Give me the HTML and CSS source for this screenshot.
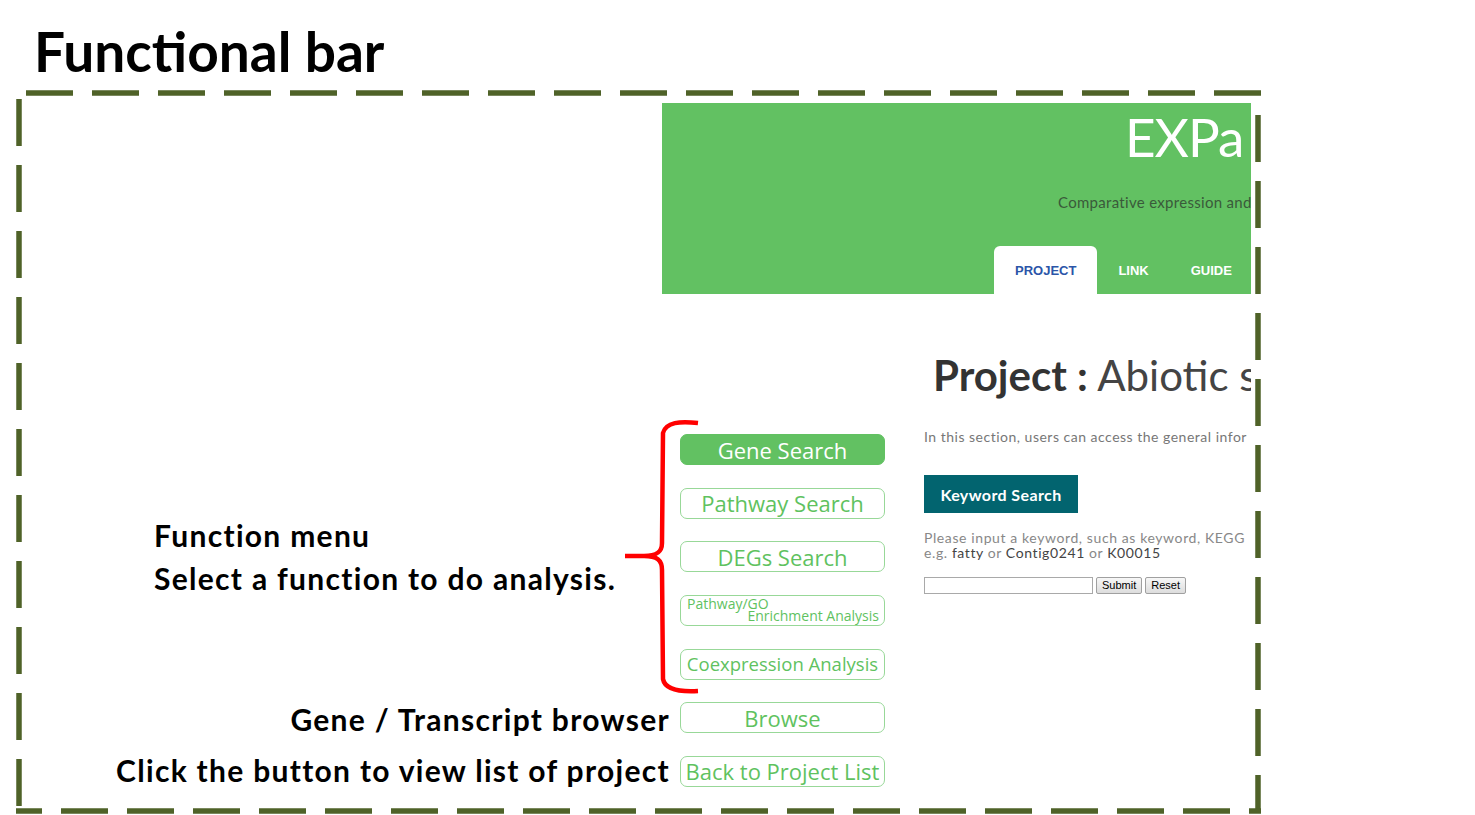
FILE: index.html
```html
<!DOCTYPE html>
<html lang="en">
  <head>
    <meta charset="UTF-8">
    <title>Functional bar</title>
    <link rel="stylesheet" href="styles.css">
  </head>
  <body>
    <div class="slide">
      <h1 class="title">Functional bar</h1>

      <div class="stage">
        <div class="notes">
          <svg class="brace" width="82" height="280" viewBox="0 0 82 280">
            <path d="M78,4 C60,2 46,3 43,14 L42,124 C42,133 37,137 24,137 L5,137 M24,137 C37,137 42,141 42,151 L43,260 C45,271 60,273 78,272" />
          </svg>
          <p class="note note-menu">Function menu<br>Select a function to do analysis.</p>
          <p class="note note-right note-browser">Gene / Transcript browser</p>
          <p class="note note-right note-list">Click the button to view list of project</p>
        </div>

        <div class="web">
          <div class="web-header">
            <div class="logo">EXPa</div>
            <div class="tagline">Comparative expression and</div>
            <ul class="tabs">
              <li class="tab active">PROJECT</li>
              <li class="tab">LINK</li>
              <li class="tab">GUIDE</li>
            </ul>
          </div>

          <div class="web-body">
            <div class="sidebar">
              <a class="fn-btn active" href="#gene">Gene Search</a>
              <a class="fn-btn" href="#pathway">Pathway Search</a>
              <a class="fn-btn" href="#degs">DEGs Search</a>
              <a class="fn-btn fn-two" href="#enrich">
                <span class="l1">Pathway/GO</span>
                <span class="l2">Enrichment Analysis</span>
              </a>
              <a class="fn-btn fn-coexp" href="#coexp">Coexpression Analysis</a>
              <a class="fn-btn" href="#browse">Browse</a>
              <a class="fn-btn" href="#list">Back to Project List</a>
            </div>

            <div class="main">
              <h2 class="project-title"><b>Project :</b> <span>Abiotic s</span></h2>
              <p class="intro">In this section, users can access the general infor</p>
              <div class="kw-btn">Keyword Search</div>
              <p class="hint">Please input a keyword, such as keyword, KEGG<br>e.g. <strong>fatty</strong> or <strong>Contig0241</strong> or <strong>K00015</strong></p>
              <form class="search-row">
                <input class="kw-input" type="text">
                <button class="small-btn" type="button">Submit</button>
                <button class="small-btn" type="button">Reset</button>
              </form>
            </div>
          </div>
        </div>
      </div>

      <svg class="frame" width="1475" height="815" viewBox="0 0 1475 815">
        <line x1="26" y1="93" x2="1262" y2="93" />
        <line x1="19" y1="99" x2="19" y2="813" />
        <line x1="1258" y1="96" x2="1258" y2="813" stroke-dashoffset="47" />
        <line x1="16" y1="811" x2="1261" y2="811" stroke-dashoffset="21" />
      </svg>
    </div>
  </body>
</html>
```

FILE: styles.css
```css
/* Slide */
body {
  margin: 0;
  background-color: #fff;
}

.slide {
  position: relative;
  width: 1475px;
  height: 815px;
  overflow: hidden;
  background-color: #fff;
}

.title {
  margin: 0;
  height: 103px;
  box-sizing: border-box;
  padding: 18px 0 0 34px;
  font-family: Lato, sans-serif;
  font-size: 55px;
  font-weight: bold;
  line-height: 66px;
  color: #000;
}

.stage {
  display: flex;
  height: 712px;
}

/* Annotations */
.notes {
  position: relative;
  flex-shrink: 0;
  width: 662px;
  font-family: Lato, sans-serif;
  font-size: 30px;
  font-weight: bold;
  letter-spacing: 1.3px;
  color: #000;
}

.note {
  margin: 0;
  line-height: 43px;
  white-space: nowrap;
}

.note-menu {
  margin-top: 411px;
  padding-left: 154px;
}

.note-right {
  text-align: right;
  margin-right: -8px;
}

.note-browser {
  margin-top: 98px;
}

.note-list {
  margin-top: 8px;
}

.brace {
  position: absolute;
  left: 620px;
  top: 316px;
}

.brace path {
  fill: none;
  stroke: #ff0000;
  stroke-width: 4.5;
}

/* Dashed frame */
.frame {
  position: absolute;
  top: 0;
  left: 0;
  pointer-events: none;
}

.frame line {
  stroke: #4f6228;
  stroke-width: 5.5;
  stroke-dasharray: 47 19;
}

/* Website capture */
.web {
  width: 589px;
  flex-shrink: 0;
  overflow: hidden;
  font-family: Lato, sans-serif;
  white-space: nowrap;
}

.web-header {
  display: flex;
  flex-direction: column;
  height: 191px;
  box-sizing: border-box;
  padding-top: 8px;
  background-color: #62c162;
}

.logo {
  padding-left: 463px;
  font-size: 53px;
  line-height: 52px;
  color: #fff;
  letter-spacing: -1px;
}

.tagline {
  margin-top: 29px;
  padding-left: 396px;
  font-size: 15px;
  letter-spacing: 0.3px;
  line-height: 20px;
  color: #3a5a3a;
}

.tabs {
  display: flex;
  margin: auto 0 0;
  padding: 0 0 0 332px;
  list-style: none;
}

.tab {
  display: flex;
  align-items: center;
  height: 48px;
  padding: 0 21px;
  font-family: "Liberation Sans", Arial, sans-serif;
  font-size: 13px;
  font-weight: bold;
  color: #fff;
}

.tab.active {
  background-color: #fff;
  color: #2b55a8;
  border-radius: 6px 6px 0 0;
}

.web-body {
  display: flex;
}

/* Function menu */
.sidebar {
  display: flex;
  flex-direction: column;
  gap: 22.67px;
  width: 205px;
  flex-shrink: 0;
  padding: 140px 0 0 18px;
}

.fn-btn {
  display: flex;
  align-items: center;
  justify-content: center;
  height: 31px;
  box-sizing: border-box;
  border: 1.5px solid #98d898;
  border-radius: 7px;
  font-family: "Open Sans", sans-serif;
  font-size: 22px;
  line-height: 1;
  color: #5fc25f;
  text-decoration: none;
}

.fn-btn.active {
  background-color: #62c162;
  border-color: #62c162;
  color: #fff;
}

.fn-coexp {
  font-size: 18.5px;
}

.fn-two {
  display: block;
  padding: 2px 5px 0 6px;
  font-size: 14px;
  line-height: 12px;
}

.fn-two .l1,
.fn-two .l2 {
  display: block;
}

.fn-two .l2 {
  text-align: right;
}

/* Project panel */
.main {
  margin-left: 39px;
}

.project-title {
  margin: 56px 0 0;
  padding-left: 9px;
  font-size: 42px;
  font-weight: normal;
  line-height: 50px;
  color: #444;
}

.project-title b {
  font-weight: bold;
  color: #333;
}

.intro {
  margin: 27px 0 0;
  font-size: 14px;
  letter-spacing: 0.5px;
  line-height: 20px;
  color: #777;
}

.kw-btn {
  display: flex;
  align-items: center;
  justify-content: center;
  width: 154px;
  height: 38px;
  margin-top: 28px;
  background-color: #02646f;
  color: #fff;
  font-size: 16px;
  font-weight: bold;
  letter-spacing: 0.4px;
}

.hint {
  margin: 17px 0 0;
  font-size: 14px;
  letter-spacing: 0.6px;
  line-height: 15px;
  color: #888;
}

.hint strong {
  font-weight: normal;
  color: #444;
}

.search-row {
  display: flex;
  align-items: center;
  gap: 3px;
  margin-top: 17px;
}

.kw-input {
  width: 169px;
  height: 17px;
  box-sizing: border-box;
  margin: 0;
  padding: 0;
  border: 1px solid #a9a9a9;
}

.small-btn {
  height: 17px;
  margin: 0;
  padding: 0 5px;
  border: 1px solid #a0a0a0;
  border-radius: 2px;
  background: linear-gradient(#f7f7f7, #dddddd);
  font-family: "Liberation Sans", Arial, sans-serif;
  font-size: 11px;
  line-height: 15px;
  color: #000;
}
```
